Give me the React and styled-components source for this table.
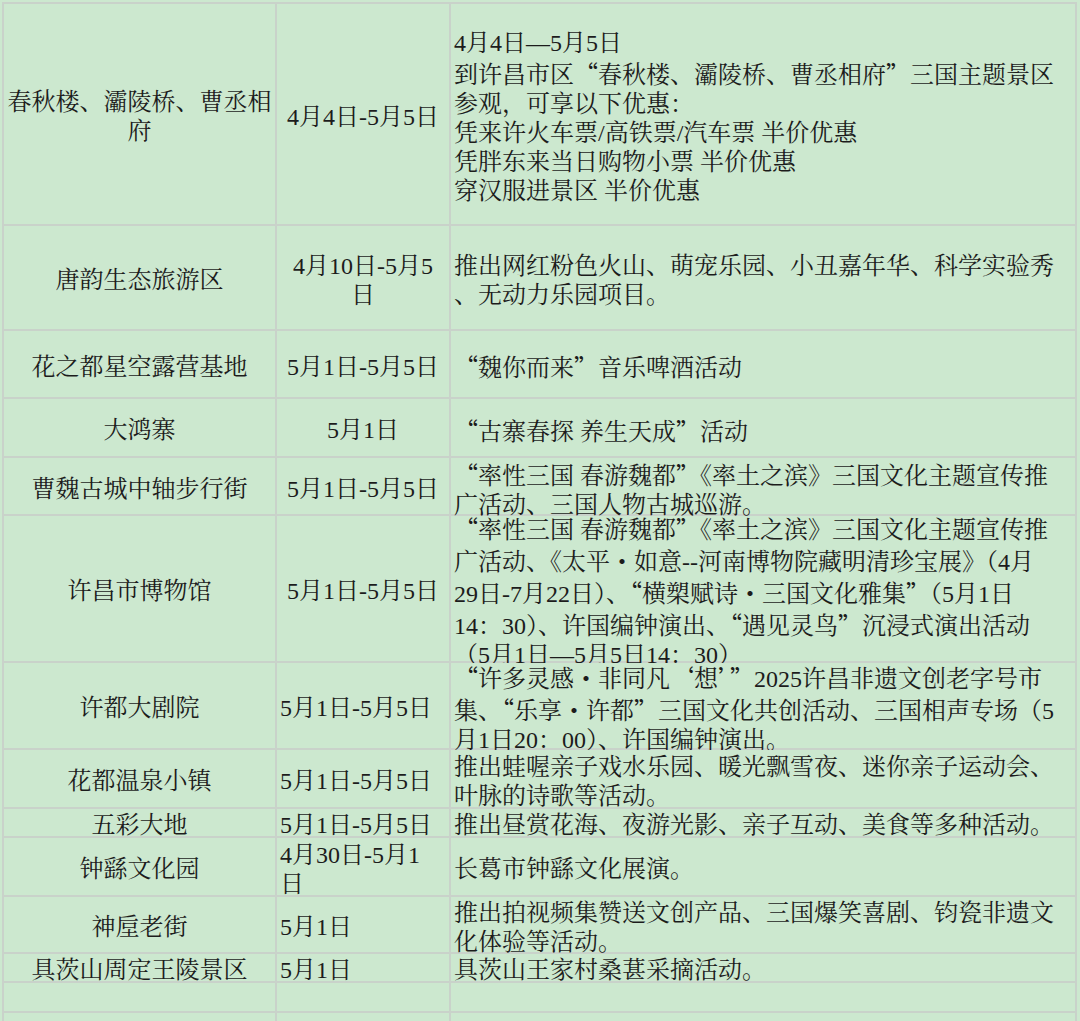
import React from "react";
import styled, { createGlobalStyle } from "styled-components";

const Global = createGlobalStyle`
  html, body {
    margin: 0;
    padding: 0;
    background: #cce8cf;
  }
  body {
    font-family: "Liberation Serif", "Noto Serif CJK SC", "Noto Sans CJK SC", serif;
    color: #1c1c1c;
  }
`;

const Page = styled.div`
  width: 1080px;
  height: 1021px;
  overflow: hidden;
  padding: 2px 0 0 2px;
  box-sizing: border-box;
`;

const Table = styled.div`
  display: flex;
  flex-direction: column;
  gap: 2px;
  padding: 2px;
  width: 1075px;
  box-sizing: border-box;
  background: #c9d2ca;
`;

const Row = styled.div`
  display: grid;
  grid-template-columns: 271px 172px 624px;
  grid-template-rows: minmax(0, 1fr);
  gap: 2px;
  height: ${(p) => p.$h}px;
  flex: none;
`;

const Cell = styled.div`
  background: #cce8cf;
  display: flex;
  flex-direction: column;
  justify-content: center;
  align-items: ${(p) => (p.$align === "left" ? "flex-start" : "center")};
  padding-left: ${(p) => (p.$align === "left" ? "3px" : "0")};
  padding-top: 6px;
  box-sizing: border-box;
  font-size: 24px;
  line-height: 29px;
  min-width: 0;
  min-height: 0;
  overflow: visible;
`;

const DescCell = styled(Cell)`
  align-items: flex-start;
  padding-left: 3px;
`;

const Line = styled.span`
  display: block;
  white-space: nowrap;
  text-align: ${(p) => (p.$align === "left" ? "left" : "center")};
`;

const Punct = styled.span`
  font-family: "Noto Sans CJK SC", sans-serif;
  font-feature-settings: "fwid" 1;
`;

function Text({ children }) {
  const parts = children.split(/([“”‘’·])/);
  return parts.map((p, i) =>
    /^[“”‘’·]$/.test(p) ? <Punct key={i}>{p}</Punct> : <React.Fragment key={i}>{p}</React.Fragment>
  );
}

const rows = [
  {
    h: 220,
    name: ["春秋楼、灞陵桥、曹丞相", "府"],
    date: ["4月4日-5月5日"],
    align: "center",
    desc: [
      "4月4日—5月5日",
      "到许昌市区“春秋楼、灞陵桥、曹丞相府”三国主题景区",
      "参观，可享以下优惠：",
      "凭来许火车票/高铁票/汽车票 半价优惠",
      "凭胖东来当日购物小票 半价优惠",
      "穿汉服进景区 半价优惠",
    ],
  },
  {
    h: 103,
    name: ["唐韵生态旅游区"],
    date: ["4月10日-5月5", "日"],
    align: "center",
    desc: ["推出网红粉色火山、萌宠乐园、小丑嘉年华、科学实验秀", "、无动力乐园项目。"],
  },
  {
    h: 66,
    name: ["花之都星空露营基地"],
    date: ["5月1日-5月5日"],
    align: "center",
    desc: ["“魏你而来”音乐啤酒活动"],
  },
  {
    h: 57,
    name: ["大鸿寨"],
    date: ["5月1日"],
    align: "center",
    desc: ["“古寨春探 养生天成”活动"],
  },
  {
    h: 56,
    name: ["曹魏古城中轴步行街"],
    date: ["5月1日-5月5日"],
    align: "center",
    desc: ["“率性三国 春游魏都”《率土之滨》三国文化主题宣传推", "广活动、三国人物古城巡游。"],
  },
  {
    h: 145,
    name: ["许昌市博物馆"],
    date: ["5月1日-5月5日"],
    align: "center",
    desc: [
      "“率性三国 春游魏都”《率土之滨》三国文化主题宣传推",
      "广活动、《太平·如意--河南博物院藏明清珍宝展》（4月",
      "29日-7月22日）、“横槊赋诗·三国文化雅集”（5月1日",
      "14：30）、许国编钟演出、“遇见灵鸟”沉浸式演出活动",
      "（5月1日—5月5日14：30）",
    ],
  },
  {
    h: 85,
    name: ["许都大剧院"],
    date: ["5月1日-5月5日"],
    align: "left",
    desc: [
      "“许多灵感·非同凡‘想’”2025许昌非遗文创老字号市",
      "集、“乐享·许都”三国文化共创活动、三国相声专场（5",
      "月1日20：00）、许国编钟演出。",
    ],
  },
  {
    h: 57,
    name: ["花都温泉小镇"],
    date: ["5月1日-5月5日"],
    align: "left",
    desc: ["推出蛙喔亲子戏水乐园、暖光飘雪夜、迷你亲子运动会、", "叶脉的诗歌等活动。"],
  },
  {
    h: 27,
    name: ["五彩大地"],
    date: ["5月1日-5月5日"],
    align: "left",
    desc: ["推出昼赏花海、夜游光影、亲子互动、美食等多种活动。"],
  },
  {
    h: 57,
    name: ["钟繇文化园"],
    date: ["4月30日-5月1", "日"],
    align: "left",
    desc: ["长葛市钟繇文化展演。"],
  },
  {
    h: 55,
    name: ["神垕老街"],
    date: ["5月1日"],
    align: "left",
    desc: ["推出拍视频集赞送文创产品、三国爆笑喜剧、钧瓷非遗文", "化体验等活动。"],
  },
  {
    h: 27,
    name: ["具茨山周定王陵景区"],
    date: ["5月1日"],
    align: "left",
    desc: ["具茨山王家村桑葚采摘活动。"],
  },
  { h: 28, name: [], date: [], align: "left", desc: [] },
  { h: 40, name: [], date: [], align: "left", desc: [] },
];

export default function App() {
  return (
    <>
      <Global />
      <Page>
        <Table>
          {rows.map((r, i) => (
            <Row key={i} $h={r.h}>
              <Cell $align="center">
                {r.name.map((t, j) => (
                  <Line key={j}>
                    <Text>{t}</Text>
                  </Line>
                ))}
              </Cell>
              <Cell $align={r.align}>
                {r.date.map((t, j) => (
                  <Line key={j} $align={r.align}>
                    <Text>{t}</Text>
                  </Line>
                ))}
              </Cell>
              <DescCell>
                {r.desc.map((t, j) => (
                  <Line key={j} $align="left">
                    <Text>{t}</Text>
                  </Line>
                ))}
              </DescCell>
            </Row>
          ))}
        </Table>
      </Page>
    </>
  );
}
